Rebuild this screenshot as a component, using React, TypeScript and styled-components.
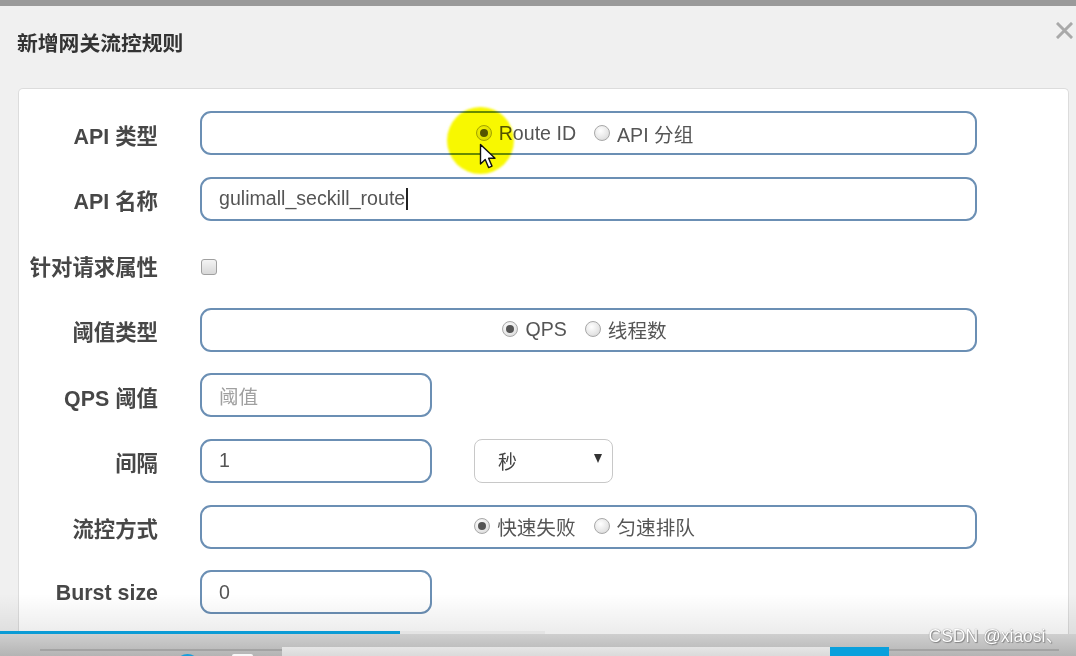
import React from 'react';
import styled, { createGlobalStyle } from 'styled-components';

// Styles
const GlobalStyle = createGlobalStyle`
  html, body {
    margin: 0;
    padding: 0;
    background: #f0f0f0;
  }
  body {
    font-family: "Liberation Sans", Arial, "Noto Sans CJK SC", sans-serif;
  }
`;

const Page = styled.div`
  position: relative;
  width: 1076px;
  height: 656px;
  overflow: hidden;
  display: flex;
  flex-direction: column;
  background: #f0f0f0;
`;

const TopStrip = styled.div`
  height: 6px;
  background: #9a9a9a;
  flex-shrink: 0;
`;

const Header = styled.div`
  height: 82px;
  flex-shrink: 0;
  display: flex;
  justify-content: space-between;
  align-items: flex-start;
  padding: 0 3px 0 17px;
`;

const Title = styled.h4`
  margin: 26px 0 0;
  font-size: 20.8px;
  line-height: 24px;
  font-weight: 700;
  color: #333;
  font-family: "Liberation Sans", "Noto Sans CJK SC", sans-serif;
`;

const Close = styled.button`
  margin-top: 16px;
  padding: 0;
  border: 0;
  background: none;
  width: 17px;
  height: 17px;
  cursor: pointer;
`;

const Card = styled.div`
  flex: 1;
  margin: 0 7px 0 18px;
  background: #fff;
  border: 1px solid #dcdcdc;
  border-bottom: 0;
  border-radius: 5px 5px 0 0;
  padding: 22px 91px 40px 0;
`;

const Form = styled.div`
  display: grid;
  grid-template-columns: 139px 1fr;
  grid-auto-rows: 44px;
  column-gap: 42px;
  row-gap: 21.6px;
`;

const Label = styled.label`
  display: flex;
  align-items: center;
  justify-content: flex-end;
  font-size: 21.4px;
  font-weight: 700;
  color: #474747;
  white-space: nowrap;
  padding-top: 2px;
  font-family: "Liberation Sans", "Noto Sans CJK SC", sans-serif;
`;

const Field = styled.div`
  display: flex;
  align-items: center;
  gap: 42px;
`;

const Box = styled.div<{ $width?: number; $center?: boolean }>`
  box-sizing: border-box;
  height: 44px;
  width: ${(p) => (p.$width ? `${p.$width}px` : '100%')};
  border: 2px solid #6b8fb4;
  border-radius: 11px;
  background: #fff;
  display: flex;
  align-items: center;
  justify-content: ${(p) => (p.$center ? 'center' : 'flex-start')};
  padding: ${(p) => (p.$center ? '0 8px 0 0' : '0 0 0 17px')};
  font-size: 19.6px;
  color: #555;
  font-family: "Liberation Sans", "Noto Sans CJK SC", sans-serif;
  gap: 18px;
`;

const Value = styled.span`
  display: inline-flex;
  align-items: center;
`;

const Placeholder = styled.span`
  color: #a0a0a0;
`;

const Caret = styled.span`
  display: inline-block;
  width: 1.5px;
  height: 22px;
  background: #222;
  margin-left: 1px;
`;

const Radio = styled.span`
  display: inline-flex;
  align-items: center;
  gap: 7px;
  white-space: nowrap;
`;

const RadioDot = styled.span<{ $checked?: boolean }>`
  box-sizing: border-box;
  width: 16px;
  height: 16px;
  border-radius: 50%;
  border: 1px solid #a8a8a8;
  background: radial-gradient(circle at 40% 35%, #ffffff 0%, #e6e6e6 60%, #cfcfcf 100%);
  display: inline-flex;
  align-items: center;
  justify-content: center;
  margin-top: -1px;

  &::after {
    content: '';
    display: ${(p) => (p.$checked ? 'block' : 'none')};
    width: 8px;
    height: 8px;
    border-radius: 50%;
    background: #555;
  }
`;

const Checkbox = styled.span`
  box-sizing: border-box;
  width: 16px;
  height: 16px;
  margin: 5px 0 0 1px;
  border: 1px solid #a0a0a0;
  border-radius: 3px;
  background: linear-gradient(#f4f4f4, #d8d8d8);
`;

const Select = styled.div`
  box-sizing: border-box;
  width: 139px;
  height: 44px;
  border: 1px solid #c8c8c8;
  border-radius: 8px;
  background: #fff;
  display: flex;
  align-items: center;
  justify-content: space-between;
  padding: 0 10px 0 23px;
  font-size: 19px;
  color: #444;
  font-family: "Liberation Sans", "Noto Sans CJK SC", sans-serif;
`;

const Arrow = styled.span`
  width: 0;
  height: 0;
  border-left: 4.5px solid transparent;
  border-right: 4.5px solid transparent;
  border-top: 9px solid #333;
  margin-top: -4px;
`;

// Video overlay (highlight, cursor, player bar)
const Highlight = styled.div`
  position: absolute;
  left: 447px;
  top: 107px;
  width: 67px;
  height: 67px;
  border-radius: 50%;
  background: #f8f800;
  mix-blend-mode: multiply;
  filter: blur(1px);
  pointer-events: none;
`;

const Pointer = styled.svg`
  position: absolute;
  left: 479px;
  top: 143px;
  pointer-events: none;
`;

const Player = styled.div`
  position: absolute;
  left: 0;
  right: 0;
  bottom: 0;
  height: 62px;
  display: flex;
  flex-direction: column;
  pointer-events: none;
`;

const Fade = styled.div`
  flex: 1;
  background: linear-gradient(rgba(0, 0, 0, 0), rgba(0, 0, 0, 0.07));
`;

const Progress = styled.div`
  height: 3px;
  background: linear-gradient(
    to right,
    #0b9bd5 0,
    #0b9bd5 400px,
    #e4e4e4 400px,
    #e4e4e4 545px,
    rgba(0, 0, 0, 0.07) 545px
  );
`;

const Controls = styled.div`
  position: relative;
  height: 22px;
  background: linear-gradient(#cfcfcf, #b4b4b4);
  display: flex;
  align-items: flex-start;

  &::before {
    content: '';
    position: absolute;
    left: 40px;
    right: 17px;
    top: 15px;
    height: 2px;
    background: #a3a3a3;
  }
`;

const PlayDot = styled.span`
  position: relative;
  margin: 20px 0 0 175px;
  width: 25px;
  height: 25px;
  border-radius: 50%;
  background: #199fdc;
`;

const Square = styled.span`
  position: relative;
  margin: 20px 0 0 32px;
  width: 21px;
  height: 21px;
  border-radius: 2px;
  background: #f8f8f8;
`;

const SearchBar = styled.span`
  position: relative;
  margin: 13px 0 0 29px;
  width: 548px;
  height: 12px;
  background: linear-gradient(#e6e6e6, #d6d6d6);
`;

const SearchButton = styled.span`
  position: relative;
  margin-top: 13px;
  width: 59px;
  height: 12px;
  background: #0aa0dc;
`;

const Watermark = styled.div`
  position: absolute;
  right: 13px;
  bottom: 9px;
  font-size: 17.5px;
  color: #ffffff;
  font-family: "Liberation Sans", "Noto Sans CJK SC", sans-serif;
  text-shadow: 0 0 1px #666, 1px 1px 1px #888;
  pointer-events: none;
`;

interface RadioOption {
  label: string;
  checked?: boolean;
}

const RadioGroup: React.FC<{ options: RadioOption[] }> = ({ options }) => (
  <Box $center>
    {options.map((o) => (
      <Radio key={o.label}>
        <RadioDot $checked={o.checked} />
        {o.label}
      </Radio>
    ))}
  </Box>
);

const App: React.FC = () => {
  return (
    <Page>
      <GlobalStyle />
      <TopStrip />
      <Header>
        <Title>新增网关流控规则</Title>
        <Close aria-label="close">
          <svg width="17" height="17" viewBox="0 0 17 17">
            <path d="M2 2 L15 15 M15 2 L2 15" stroke="#a9a9a9" strokeWidth="3" strokeLinecap="square" />
          </svg>
        </Close>
      </Header>

      <Card>
        <Form>
          <Label>API 类型</Label>
          <RadioGroup options={[{ label: 'Route ID', checked: true }, { label: 'API 分组' }]} />

          <Label>API 名称</Label>
          <Box>
            <Value>
              gulimall_seckill_route
              <Caret />
            </Value>
          </Box>

          <Label>针对请求属性</Label>
          <Field>
            <Checkbox />
          </Field>

          <Label>阈值类型</Label>
          <RadioGroup options={[{ label: 'QPS', checked: true }, { label: '线程数' }]} />

          <Label>QPS 阈值</Label>
          <Field>
            <Box $width={232}>
              <Placeholder>阈值</Placeholder>
            </Box>
          </Field>

          <Label>间隔</Label>
          <Field>
            <Box $width={232}>1</Box>
            <Select>
              秒
              <Arrow />
            </Select>
          </Field>

          <Label>流控方式</Label>
          <RadioGroup options={[{ label: '快速失败', checked: true }, { label: '匀速排队' }]} />

          <Label>Burst size</Label>
          <Field>
            <Box $width={232}>0</Box>
          </Field>
        </Form>
      </Card>

      <Highlight />
      <Pointer width="20" height="28" viewBox="0 0 20 28">
        <path
          d="M1.5 1.5 L1.5 21 L6.2 16.6 L9.6 24.6 L13 23.1 L9.6 15.3 L16 15.3 Z"
          fill="#fff"
          stroke="#111"
          strokeWidth="1.4"
          strokeLinejoin="round"
        />
      </Pointer>

      <Player>
        <Fade />
        <Progress />
        <Controls>
          <PlayDot />
          <Square />
          <SearchBar />
          <SearchButton />
        </Controls>
      </Player>
      <Watermark>CSDN @xiaosi、</Watermark>
    </Page>
  );
};

export default App;
